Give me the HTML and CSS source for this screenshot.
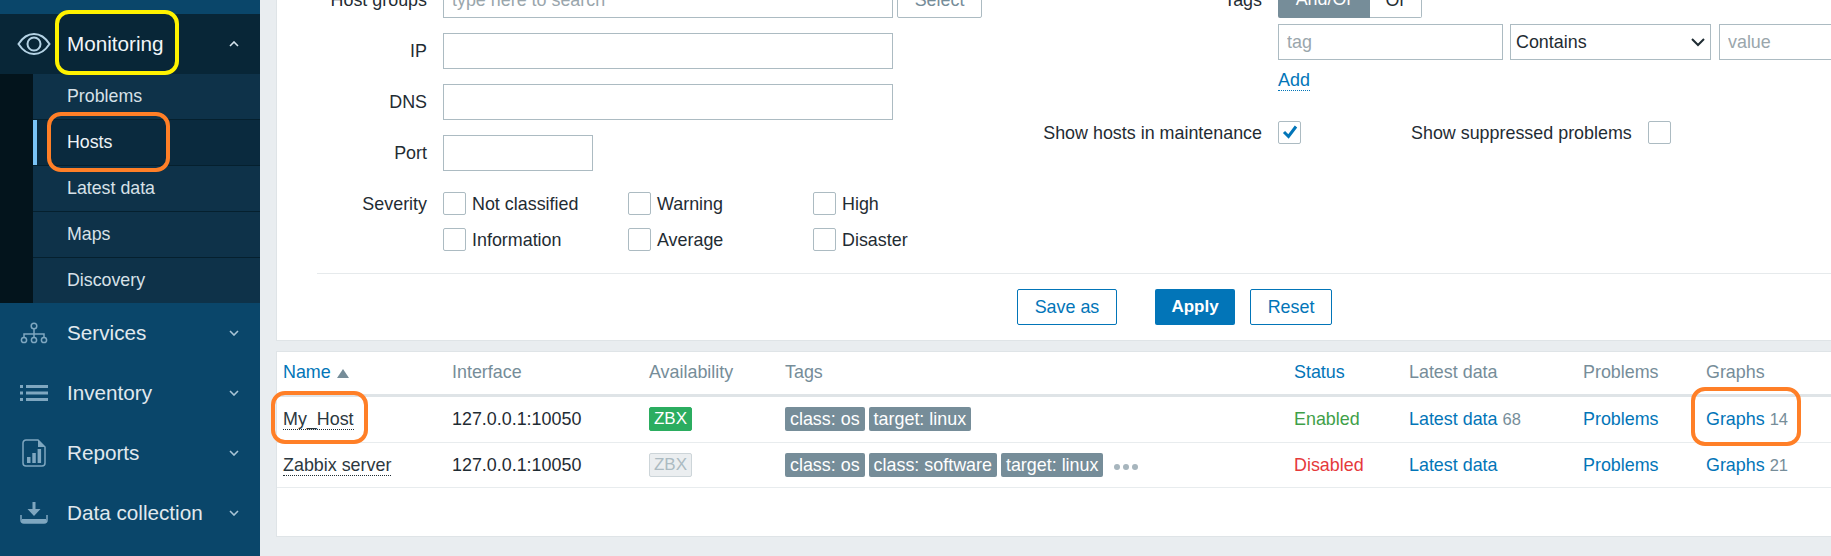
FILE: index.html
```html
<!DOCTYPE html>
<html lang="en">
<head>
<meta charset="utf-8">
<title>Hosts</title>
<link rel="stylesheet" href="styles.css">
</head>
<body>
<div class="app">
  <aside class="sidebar">
    <div class="strip"></div>
    <div class="nav-item active">
      <span class="nav-icon"><svg width="34" height="24" viewBox="0 0 34 24" fill="none" stroke="#b4d2e4" stroke-width="2"><path d="M1.5 12C6 5 11 2 17 2s11 3 15.500 10C28 19 23 22 17 22S6 19 1.500 12Z"/><circle cx="17" cy="12" r="6.500"/></svg></span>
      <span class="nav-label">Monitoring</span>
      <svg class="chev" width="10" height="6" viewBox="0 0 10 6" fill="none" stroke="#d5e3ec" stroke-width="1.600"><path d="M1 5l4-4 4 4"/></svg>
    </div>
    <div class="submenu">
      <div class="sub-item">Problems</div>
      <div class="sub-item current">Hosts</div>
      <div class="sub-item">Latest data</div>
      <div class="sub-item">Maps</div>
      <div class="sub-item">Discovery</div>
    </div>
    <div class="nav-item">
      <span class="nav-icon"><svg width="28" height="22" viewBox="0 0 28 22" fill="none" stroke="#7fa7c0" stroke-width="1.500"><circle cx="14" cy="4" r="2.800"/><path d="M14 7v5M4 16v-4h20v4M14 12v4"/><circle cx="4" cy="18" r="2.600"/><circle cx="14" cy="18" r="2.600"/><circle cx="24" cy="18" r="2.600"/></svg></span>
      <span class="nav-label">Services</span>
      <svg class="chev" width="10" height="6" viewBox="0 0 10 6" fill="none" stroke="#a9c4d6" stroke-width="1.600"><path d="M1 1l4 4 4-4"/></svg>
    </div>
    <div class="nav-item">
      <span class="nav-icon"><svg width="28" height="16" viewBox="0 0 28 16" fill="#7fa7c0"><rect x="0" y="0" width="3" height="3"/><rect x="0" y="6.500" width="3" height="3"/><rect x="0" y="13" width="3" height="3"/><rect x="6" y="0" width="22" height="3"/><rect x="6" y="6.500" width="22" height="3"/><rect x="6" y="13" width="22" height="3"/></svg></span>
      <span class="nav-label">Inventory</span>
      <svg class="chev" width="10" height="6" viewBox="0 0 10 6" fill="none" stroke="#a9c4d6" stroke-width="1.600"><path d="M1 1l4 4 4-4"/></svg>
    </div>
    <div class="nav-item">
      <span class="nav-icon"><svg width="24" height="28" viewBox="0 0 24 28" fill="none"><path d="M4 1h12l7 7v16a3 3 0 0 1-3 3H4a3 3 0 0 1-3-3V4a3 3 0 0 1 3-3Z" stroke="#7fa7c0" stroke-width="1.500"/><path d="M16 1v7h7" fill="#7fa7c0"/><rect x="5" y="18" width="3.500" height="6" fill="#7fa7c0"/><rect x="10.300" y="14" width="3.500" height="10" fill="#7fa7c0"/><rect x="15.600" y="10" width="3.500" height="14" fill="#7fa7c0"/></svg></span>
      <span class="nav-label">Reports</span>
      <svg class="chev" width="10" height="6" viewBox="0 0 10 6" fill="none" stroke="#a9c4d6" stroke-width="1.600"><path d="M1 1l4 4 4-4"/></svg>
    </div>
    <div class="nav-item">
      <span class="nav-icon"><svg width="28" height="22" viewBox="0 0 28 22" fill="#7fa7c0"><path d="M12.500 0h3v7h5l-6.500 7-6.500-7h5Z"/><path d="M1 13v5a3 3 0 0 0 3 3h20a3 3 0 0 0 3-3v-5" fill="none" stroke="#7fa7c0" stroke-width="1.500"/><rect x="2" y="17" width="24" height="4"/></svg></span>
      <span class="nav-label">Data collection</span>
      <svg class="chev" width="10" height="6" viewBox="0 0 10 6" fill="none" stroke="#a9c4d6" stroke-width="1.600"><path d="M1 1l4 4 4-4"/></svg>
    </div>
  </aside>

  <main class="main">
    <section class="panel filter">
      <div class="filter-cols">
        <div class="col-left">
          <div class="row"><label class="lbl">Host groups</label><input class="input wide" placeholder="type here to search"><button class="btn-alt select-btn">Select</button></div>
          <div class="row"><label class="lbl">IP</label><input class="input wide"></div>
          <div class="row"><label class="lbl">DNS</label><input class="input wide"></div>
          <div class="row"><label class="lbl">Port</label><input class="input port"></div>
          <div class="row severity-row">
            <label class="lbl sev-lbl">Severity</label>
            <div class="sev-grid">
              <span class="chk-item"><span class="chk"></span><span class="chk-text">Not classified</span></span>
              <span class="chk-item"><span class="chk"></span><span class="chk-text">Warning</span></span>
              <span class="chk-item"><span class="chk"></span><span class="chk-text">High</span></span>
              <span class="chk-item"><span class="chk"></span><span class="chk-text">Information</span></span>
              <span class="chk-item"><span class="chk"></span><span class="chk-text">Average</span></span>
              <span class="chk-item"><span class="chk"></span><span class="chk-text">Disaster</span></span>
            </div>
          </div>
        </div>
        <div class="col-right">
          <div class="row"><label class="lbl-r">Tags</label>
            <div class="seg"><span class="seg-on">And/Or</span><span class="seg-off">Or</span></div>
          </div>
          <div class="row tag-row"><span class="lbl-r"></span>
            <input class="input tag" placeholder="tag">
            <select class="input op"><option>Contains</option></select>
            <input class="input value" placeholder="value">
          </div>
          <div class="row add-row"><span class="lbl-r"></span><a class="add">Add</a></div>
          <div class="row maint-row"><label class="lbl-r chk-text">Show hosts in maintenance</label>
            <span class="chk"><svg width="20" height="20" viewBox="0 0 20 20" fill="none" stroke="#0275b8" stroke-width="3"><path d="M4 10l4.500 4.500L16 4.500"/></svg></span>
            <label class="supp chk-text">Show suppressed problems</label>
            <span class="chk"></span>
          </div>
        </div>
      </div>
      <div class="actions">
        <button class="btn-alt save">Save as</button>
        <button class="btn-main">Apply</button>
        <button class="btn-alt reset">Reset</button>
      </div>
    </section>

    <section class="panel hosts">
      <div class="tr head">
        <span><a class="link">Name</a> <i class="sort"></i></span>
        <span>Interface</span>
        <span>Availability</span>
        <span>Tags</span>
        <span><a class="link">Status</a></span>
        <span>Latest data</span>
        <span>Problems</span>
        <span>Graphs</span>
      </div>
      <div class="tr first">
        <span><a class="host">My_Host</a></span>
        <span>127.0.0.1:10050</span>
        <span><b class="zbx on">ZBX</b></span>
        <span class="tags"><b class="tag-b">class: os</b><b class="tag-b">target: linux</b></span>
        <span class="ok">Enabled</span>
        <span><a class="link">Latest data</a> <small class="num">68</small></span>
        <span><a class="link">Problems</a></span>
        <span><a class="link">Graphs</a> <small class="num">14</small></span>
      </div>
      <div class="tr">
        <span><a class="host">Zabbix server</a></span>
        <span>127.0.0.1:10050</span>
        <span><b class="zbx off">ZBX</b></span>
        <span class="tags"><b class="tag-b">class: os</b><b class="tag-b">class: software</b><b class="tag-b">target: linux</b><i class="dots"><i></i><i></i><i></i></i></span>
        <span class="bad">Disabled</span>
        <span><a class="link">Latest data</a></span>
        <span><a class="link">Problems</a></span>
        <span><a class="link">Graphs</a> <small class="num">21</small></span>
      </div>
    </section>
  </main>

  <div class="mark yellow"></div>
  <div class="mark orange hosts-mark"></div>
  <div class="mark orange host-mark"></div>
  <div class="mark orange graphs-mark"></div>
</div>
</body>
</html>
```
FILE: styles.css
```css
* { box-sizing: border-box; }
html, body { margin: 0; height: 556px; overflow: hidden; }
body { font-family: "Liberation Sans", Arial, sans-serif; font-size: 17.900px; color: #1f2c33; }
.app { position: relative; display: flex; width: 1831px; height: 556px; overflow: hidden; }

/* Sidebar */
.sidebar { flex: 0 0 260px; background: #0a466a; color: #e1e9ee; }
.strip { height: 14px; }
.nav-item { display: flex; align-items: center; height: 60px; }
.nav-item.active { background: #082637; color: #f1f5f8; }
.nav-icon { flex: 0 0 67px; display: flex; justify-content: center; }
.nav-label { flex: 1; font-size: 20.700px; }
.chev { margin-right: 21px; }
.submenu { height: 229px; padding-left: 33px; background: #03141c; }
.sub-item { position: relative; height: 46px; padding-left: 34px; line-height: 45px; font-size: 17.800px; color: #d7e1e8; background: #0e3249; border-bottom: 1px solid #05202e; }
.sub-item:last-child { height: 45px; border-bottom: 0; }
.sub-item.current { background: #0a2a3e; color: #eef3f6; }
.sub-item.current::before { content: ""; position: absolute; left: 0; top: 0; bottom: 0; width: 4px; background: #79c3f5; }

/* Main */
.main { flex: 1; padding-left: 16px; background: #e9edf0; }
.panel { background: #fff; border: 1px solid #dfe4e7; border-right: 0; }
.filter { display: flow-root; height: 341px; border-top: 0; }
.filter-cols { display: flex; height: 291px; margin-top: -18px; }
.col-left { flex: 0 0 736px; }
.col-right { flex: 1; }
.row { display: flex; align-items: center; height: 36px; margin-bottom: 15px; }
.lbl { flex: 0 0 150px; margin-right: 16px; text-align: right; }
.lbl-r { flex: 0 0 249px; margin-right: 16px; text-align: right; white-space: nowrap; }
.input { height: 36px; border: 1px solid #acbbc2; background: #fff; padding: 0 8px; font: inherit; color: #1f2c33; border-radius: 0; }
.input::placeholder { color: #9aa6ac; opacity: 1; }
.wide { width: 450px; }
.port { width: 150px; }
.btn-alt { height: 36px; background: #fff; border: 1px solid #0275b8; border-radius: 2px; color: #0275b8; font: inherit; padding: 0; }
.select-btn { width: 85px; margin-left: 4px; border-color: #acbbc2; color: #768d99; }
.severity-row { align-items: flex-start; height: 59px; margin-top: 21px; margin-bottom: 0; }
.sev-lbl { line-height: 25px; }
.sev-grid { display: grid; grid-template-columns: 185px 185px 185px; grid-auto-rows: 23px; row-gap: 13px; }
.chk-item { display: flex; align-items: center; }
.chk-text { margin-top: 2px; }
.chk { flex: 0 0 23px; display: flex; align-items: center; justify-content: center; width: 23px; height: 23px; margin-right: 6px; border: 1px solid #acbbc2; border-radius: 2px; background: #fff; }
.seg { display: flex; height: 36px; width: 144px; line-height: 34px; text-align: center; }
.seg-on { flex: 0 0 92px; background: #768d99; color: #fff; border-radius: 2px 0 0 2px; }
.seg-off { flex: 1; border: 1px solid #acbbc2; border-left: 0; border-radius: 0 2px 2px 0; }
.tag-row { margin-top: -9px; margin-bottom: 0; }
.tag { width: 225px; }
.op { width: 201px; margin-left: 7px; padding: 0 5px; appearance: none; -webkit-appearance: none; background: #fff url("data:image/svg+xml,%3Csvg xmlns='http://www.w3.org/2000/svg' width='14' height='9' viewBox='0 0 14 9' fill='none' stroke='%231f2c33' stroke-width='2'%3E%3Cpath d='M1 1l6 6 6-6'/%3E%3C/svg%3E") no-repeat right 5px center; }
.value { width: 115px; margin-left: 8px; }
.add-row { height: 24px; margin-top: 8px; margin-bottom: 0; }
.add { color: #0275b8; border-bottom: 1px dotted #0275b8; line-height: 20px; }
.maint-row { height: 24px; margin-top: 28px; margin-bottom: 0; }
.maint-row .chk { margin-right: 0; }
.supp { margin-left: 110px; margin-right: 16px; white-space: nowrap; }
.actions { display: flex; align-items: center; height: 67px; margin-left: 40px; padding-left: 700px; border-top: 1px solid #e6eaec; }
.save { width: 100px; margin-right: 38px; }
.btn-main { width: 80px; height: 36px; margin-right: 15px; background: #0275b8; color: #fff; border: 0; border-radius: 2px; font: inherit; font-size: 17px; font-weight: 700; }
.reset { width: 82px; }

/* Table */
.hosts { height: 186px; margin-top: 10px; }
.tr { display: grid; grid-template-columns: 169px 197px 136px 509px 115px 174px 123px 1fr; align-items: center; height: 45px; padding-left: 6px; border-bottom: 1px solid #e8ecee; white-space: nowrap; }
.tr.head { padding-bottom: 2px; color: #768d99; border-bottom: 3px solid #dfe4e7; }
.tr.first { height: 46px; padding-bottom: 1px; }
.link { color: #0275b8; }
.sort { display: inline-block; width: 0; height: 0; margin-left: 1px; border: 6px solid transparent; border-top: 0; border-bottom: 9px solid #768d99; }
.host { display: inline-block; border-bottom: 1px dotted #1f2c33; line-height: 20px; color: #2c3840; }
.zbx { display: inline-block; width: 43px; height: 24px; line-height: 22px; text-align: center; font-weight: 400; font-size: 17px; border-radius: 2px; border: 1px solid #2bad60; background: #2bad60; color: #fff; }
.zbx.off { background: #ebeef0; border-color: #cdd5d9; color: #acbbc2; }
.tags { display: flex; align-items: center; gap: 4px; }
.tag-b { height: 24px; padding: 0 5px; line-height: 24px; font-weight: 400; background: #768d99; color: #fff; border-radius: 2px; }
.dots { display: inline-flex; gap: 3px; margin-left: 7px; margin-top: 3px; }
.dots i { width: 6px; height: 6px; border-radius: 50%; background: #a7b5bd; }
.ok { color: #3f9f49; }
.bad { color: #e5393b; }
.num { font-size: 16.500px; color: #768d99; }

/* Hand-drawn annotations over the screenshot */
.mark { position: absolute; border: 4px solid; border-radius: 14px; pointer-events: none; }
.yellow { left: 55px; top: 10px; width: 124px; height: 65px; border-color: #fff200; }
.orange { border-color: #ff7f27; }
.hosts-mark { left: 47px; top: 112px; width: 123px; height: 60px; }
.host-mark { left: 271px; top: 391px; width: 97px; height: 53px; }
.graphs-mark { left: 1691px; top: 387px; width: 110px; height: 59px; }
```
